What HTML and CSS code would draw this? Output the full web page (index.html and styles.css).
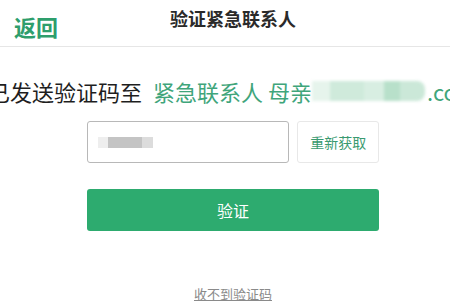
FILE: index.html
```html
<!DOCTYPE html>
<html lang="zh-CN">
<head>
    <meta charset="UTF-8">
    <meta name="viewport" content="width=device-width, initial-scale=1.0">
    <title>验证紧急联系人</title>
    <link rel="stylesheet" href="styles.css">
</head>
<body>
    <header class="top">
        <a class="back" href="#">返回</a>
        <h1 class="title">验证紧急联系人</h1>
        <span></span>
    </header>
    <main>
        <p class="sent">
            <span>已发送验证码至</span>
            <span class="green who">紧急联系人</span>
            <span class="green mom">母亲</span>
            <span class="mosaic">
                <i class="m1"></i><i class="m2"></i><i class="m3"></i><i class="m4"></i><i class="m5"></i>
            </span>
            <span class="green dom">.com</span>
        </p>
        <div class="box">
            <div class="code-row">
                <div class="code-input">
                    <span class="ph"><i class="p1"></i><i class="p2"></i><i class="p3"></i></span>
                </div>
                <button class="resend">重新获取</button>
            </div>
            <button class="verify">验证</button>
            <div class="help">
                <a href="#">收不到验证码</a>
            </div>
        </div>
    </main>
</body>
</html>
```

FILE: styles.css
```css
*{
    padding: 0;
    margin: 0;
    box-sizing: border-box;
}
body{
    width: 450px;
    height: 304px;
    overflow: hidden;
    background: #fff;
    font-family: "Noto Sans CJK SC", "Noto Sans", sans-serif;
    color: #222;
}
.top{
    height: 47px;
    border-bottom: 1px solid #e6e6e6;
    display: grid;
    grid-template-columns: 1fr auto 1fr;
}
.back{
    padding: 11px 0 0 14px;
    font-size: 22px;
    font-weight: bold;
    line-height: 30px;
    color: #2e9e6c;
    text-decoration: none;
}
.title{
    padding: 5px 0 0 16px;
    font-size: 18px;
    line-height: 26px;
    font-weight: bold;
    color: #2a2a2a;
}
.sent{
    margin: 29px 0 0 -12px;
    display: flex;
    align-items: center;
    white-space: nowrap;
    font-size: 22px;
    line-height: 30px;
    color: #1e1e1e;
}
.sent .green{
    color: #3fa57b;
}
.sent .who{
    margin-left: 11px;
}
.sent .mom{
    margin-left: 5px;
}
.sent .dom{
    margin-left: 2px;
}
.mosaic{
    display: inline-flex;
    width: 113px;
    height: 20px;
    filter: blur(1.5px);
}
.mosaic i{
    display: block;
    height: 100%;
}
.m1{ width: 18px; background: #e6f4ec; }
.m2{ width: 34px; background: #cfeadb; }
.m3{ width: 20px; background: #d8eee2; }
.m4{ width: 16px; background: #b8e0ca; }
.m5{ width: 25px; background: #cbe8d8; border-radius: 0 8px 8px 0; }
.box{
    width: 292px;
    margin: 15px 0 0 87px;
}
.code-row{
    display: flex;
    gap: 8px;
}
.code-input{
    width: 203px;
    height: 42px;
    border: 1px solid #b8b8b8;
    border-radius: 3px;
    display: flex;
    align-items: center;
    padding-left: 10px;
}
.ph{
    display: flex;
    height: 11px;
    filter: blur(0.6px);
}
.ph i{
    display: block;
    height: 100%;
}
.p1{ width: 10px; background: #eeeeee; }
.p2{ width: 34px; background: #c4c4c4; }
.p3{ width: 11px; background: #dcdcdc; }
.resend{
    width: 82px;
    height: 42px;
    background: #fff;
    border: 1px solid #e8e8e8;
    border-radius: 3px;
    font-family: inherit;
    font-size: 14px;
    color: #3a9a70;
}
.verify{
    display: block;
    width: 292px;
    height: 42px;
    margin-top: 26px;
    background: #2dab6f;
    border: none;
    border-radius: 3px;
    font-family: inherit;
    font-size: 16px;
    color: #fff;
}
.help{
    margin-top: 54px;
    text-align: center;
    font-size: 13px;
    line-height: 18px;
}
.help a{
    color: #8a8a8a;
}
```
